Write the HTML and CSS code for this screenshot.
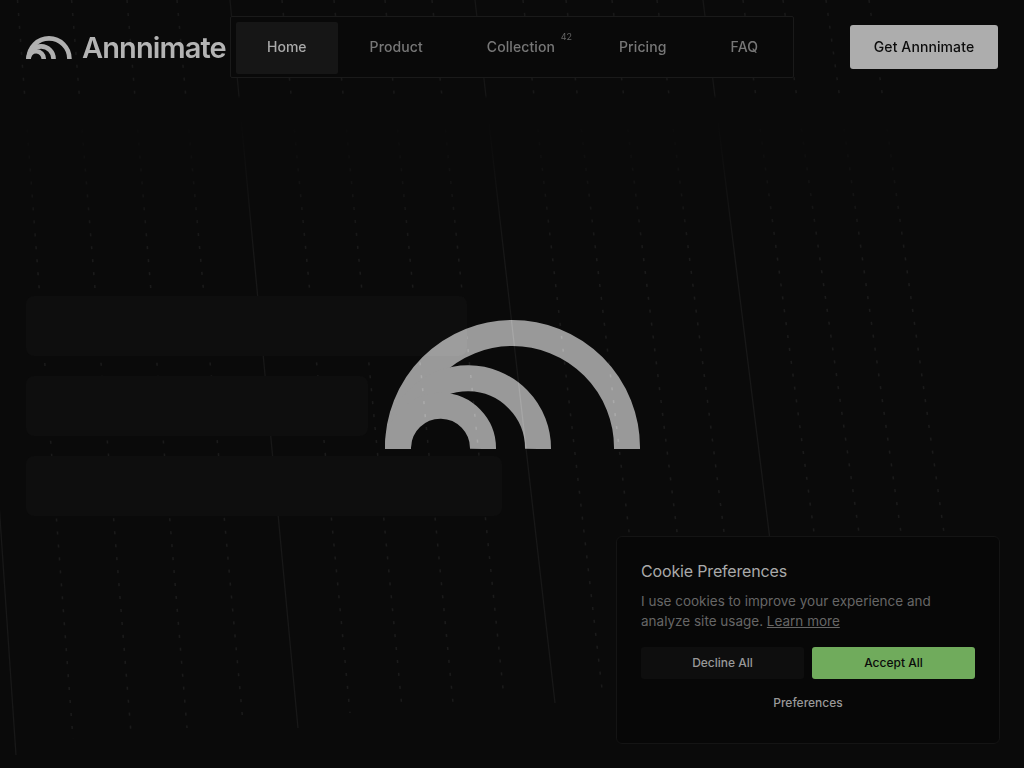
FILE: index.html
```html
<!DOCTYPE html>
<html>

<head>
    <title>Annnimate</title>
    <link rel="stylesheet" href="styles.css">
</head>

<body>
    <!-- falling lines behind everything -->
    <svg class="rain" width="1024" height="768" viewBox="0 0 1024 768">
        <defs>
            <linearGradient id="fade" gradientUnits="userSpaceOnUse" x1="0" y1="0" x2="0" y2="768">
                <stop offset="0" stop-color="#fff" stop-opacity=".07" />
                <stop offset=".124" stop-color="#fff" stop-opacity=".07" />
                <stop offset=".128" stop-color="#fff" stop-opacity="0" />
                <stop offset=".15" stop-color="#fff" stop-opacity="0" />
                <stop offset=".33" stop-color="#fff" stop-opacity=".08" />
                <stop offset="1" stop-color="#fff" stop-opacity=".08" />
            </linearGradient>
            <symbol id="mark" viewBox="0 0 255 129">
                <path d="M13 129V127.5A114.5 114.5 0 0 1 242 127.5V129" />
                <path d="M13 129V127.5A70 70 0 0 1 153 129" />
                <path d="M13 129V127.5A42.5 42.5 0 0 1 98 129" />
            </symbol>
        </defs>
        <line class="solid" x1="-35" y1="0" x2="16" y2="755" />
        <line class="dots" x1="17.5" y1="0" x2="73" y2="739" />
        <line class="dots" x1="71.6" y1="0" x2="131" y2="733" />
        <line class="dots" x1="127" y1="0" x2="187" y2="728" />
        <line class="dots" x1="177" y1="0" x2="243" y2="723" />
        <line class="solid" x1="230" y1="0" x2="298" y2="728" />
        <line class="dots" x1="282" y1="0" x2="350" y2="713" />
        <line class="dots" x1="334" y1="0" x2="402" y2="708" />
        <line class="dots" x1="385" y1="0" x2="453" y2="703" />
        <line class="dots" x1="432" y1="0" x2="504" y2="698" />
        <line class="solid" x1="475" y1="0" x2="555" y2="703" />
        <line class="dots" x1="523" y1="0" x2="602" y2="689" />
        <line class="dots" x1="566" y1="0" x2="630" y2="540" />
        <line class="dots" x1="612" y1="0" x2="678" y2="540" />
        <line class="dots" x1="657" y1="0" x2="725" y2="540" />
        <line class="solid" x1="703" y1="0" x2="770" y2="540" />
        <line class="dots" x1="743" y1="0" x2="815" y2="540" />
        <line class="dots" x1="783" y1="0" x2="860" y2="540" />
        <line class="dots" x1="826" y1="0" x2="902" y2="540" />
        <line class="dots" x1="869" y1="0" x2="945" y2="540" />
    </svg>

    <header class="top">
        <a class="brand" href="#">
            <svg class="brand-mark" width="46" height="23">
                <use href="#mark" />
            </svg>
            <span class="brand-name">Annnimate</span>
        </a>
        <nav class="menu">
            <a class="menu-item active" href="#">Home</a>
            <a class="menu-item" href="#">Product</a>
            <a class="menu-item" href="#">Collection<sup class="count">42</sup></a>
            <a class="menu-item" href="#">Pricing</a>
            <a class="menu-item" href="#">FAQ</a>
        </nav>
        <a class="cta" href="#">Get Annnimate</a>
    </header>

    <main class="hero">
        <div class="bar bar-a"></div>
        <div class="bar bar-b"></div>
        <div class="bar bar-c"></div>
    </main>

    <div class="loader">
        <svg class="loader-mark" width="255" height="129">
            <use href="#mark" />
        </svg>
    </div>

    <aside class="cookie">
        <h2>Cookie Preferences</h2>
        <p>I use cookies to improve your experience and analyze site usage. <a href="#">Learn more</a></p>
        <div class="cookie-btns">
            <button class="decline">Decline All</button>
            <button class="accept">Accept All</button>
        </div>
        <button class="prefs">Preferences</button>
    </aside>
</body>

</html>
```

FILE: styles.css
```css
* {
    padding: 0;
    margin: 0;
    box-sizing: border-box;
}

html,
body {
    height: 100%;
    overflow: hidden;
}

body {
    position: relative;
    background: #0a0a0a;
    font-family: Inter, "Liberation Sans", sans-serif;
    color: #aaa;
}

a {
    color: inherit;
    text-decoration: none;
}

button {
    font-family: inherit;
    border: 0;
    background: none;
    cursor: pointer;
}

.rain {
    position: absolute;
    left: 0;
    top: 0;
}

.rain .solid {
    stroke: url(#fade);
    stroke-width: 1.2;
    stroke-opacity: .7;
}

.rain .dots {
    stroke: url(#fade);
    stroke-width: 1.5;
    stroke-opacity: .85;
    stroke-dasharray: 3 10;
}

#mark path {
    fill: none;
    stroke-width: 26;
}

.top {
    position: relative;
    display: flex;
    align-items: center;
    gap: 4px;
    padding: 16px 26px 0;
}

.brand {
    display: flex;
    align-items: center;
    gap: 10px;
    width: 200px;
}

.brand-mark {
    stroke: #b0b0b0;
    flex: none;
}

.brand-name {
    font-size: 29px;
    font-weight: 600;
    letter-spacing: -.9px;
    color: #b4b4b4;
}

.menu {
    display: flex;
    width: 564px;
    height: 62px;
    padding: 5px 5px 3px;
    background: #090909;
    border: 1px solid #1a1a1a;
    border-radius: 2px;
}

.menu-item {
    position: relative;
    display: flex;
    align-items: center;
    padding: 0 32px 3px;
    font-size: 14px;
    font-weight: 500;
    letter-spacing: .1px;
    color: #777;
    border-radius: 2px;
}

.menu-item.active {
    padding: 0 31px 3px;
    background: #161616;
    color: #aaa;
    letter-spacing: 0;
}

.count {
    position: absolute;
    left: 106px;
    top: 9px;
    font-size: 9px;
    font-weight: 400;
    letter-spacing: 0;
    line-height: 12px;
    color: #666;
}

.cta {
    margin-left: auto;
    display: flex;
    align-items: center;
    justify-content: center;
    width: 148px;
    height: 44px;
    padding-bottom: 2px;
    background: #adadad;
    border-radius: 3px;
    font-size: 14px;
    font-weight: 500;
    letter-spacing: .1px;
    color: #0c0c0c;
}

.hero {
    position: relative;
    display: flex;
    flex-direction: column;
    gap: 20px;
    padding: 218px 0 0 26px;
}

.bar {
    height: 60px;
    background: #0e0e0e;
    border-radius: 8px;
}

.bar-a {
    width: 441px;
}

.bar-b {
    width: 342px;
}

.bar-c {
    width: 476px;
}

.loader {
    position: absolute;
    left: 0;
    right: 0;
    top: 0;
    bottom: 0;
    display: flex;
    align-items: center;
    justify-content: center;
}

/* adds to what is below so the lines still show through it */
.loader-mark {
    stroke: #8f8f8f;
    mix-blend-mode: plus-lighter;
}

.cookie {
    position: absolute;
    right: 24px;
    bottom: 24px;
    width: 384px;
    height: 208px;
    padding: 24px;
    background: #070707;
    border: 1px solid #141414;
    border-radius: 6px;
}

.cookie h2 {
    font-size: 16px;
    font-weight: 400;
    letter-spacing: -.16px;
    line-height: 20px;
    color: #aaa;
    margin-bottom: 10px;
}

.cookie p {
    font-size: 13.5px;
    line-height: 20px;
    color: #666;
    margin-bottom: 16px;
}

.cookie p a {
    text-decoration: underline;
}

.cookie-btns {
    display: flex;
    gap: 8px;
}

.cookie-btns button {
    flex: 1;
    height: 32px;
    padding-bottom: 2px;
    border-radius: 3px;
    font-size: 12px;
    font-weight: 500;
}

.decline {
    background: #0e0e0e;
    color: #999;
}

.cookie-btns .accept {
    background: #70ab5c;
    color: #0a0a0a;
}

.prefs {
    display: block;
    width: 100%;
    margin-top: 16px;
    font-size: 12px;
    font-weight: 500;
    line-height: 16px;
    color: #999;
}
```
